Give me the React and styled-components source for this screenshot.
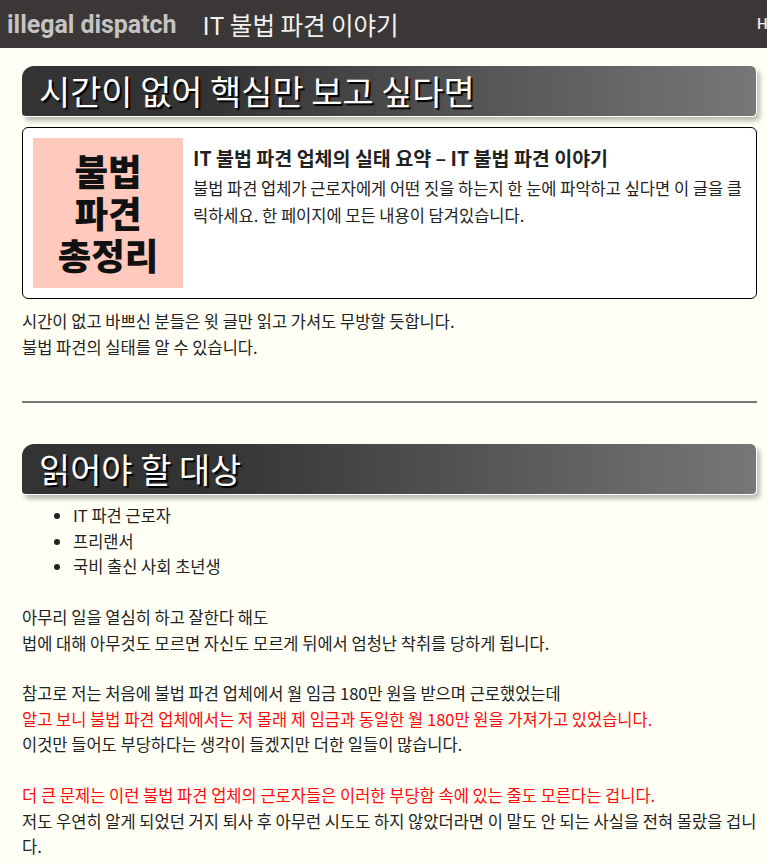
import styled, { createGlobalStyle } from "styled-components";

const Global = createGlobalStyle`
    body {
        margin: 0;
        background: #fffff5;
        color: #222;
        font-family: "Noto Sans CJK KR", "Noto Sans", sans-serif;
        overflow-x: hidden;
    }
`;

const Header = styled.header`
    height: 48px;
    background: #3b3736;
    display: flex;
    align-items: center;
    padding-left: 7px;
    overflow: hidden;
    white-space: nowrap;
`;

const Logo = styled.div`
    font-family: Roboto, "Noto Sans", sans-serif;
    font-weight: 700;
    font-size: 25px;
    color: #c4c4c4;
    letter-spacing: -0.05px;
    flex: none;
`;

const SiteTitle = styled.div`
    margin-left: 26px;
    font-size: 24.5px;
    color: #f2f2f2;
    flex: none;
`;

const Nav = styled.nav`
    margin-left: auto;
    margin-right: -40px;
    width: 50px;
    flex: none;
    font-family: Roboto, sans-serif;
    font-size: 15px;
    font-weight: 500;
    color: #eee;
`;

const Main = styled.main`
    padding: 18px 10px 0 22px;
    font-size: 16.5px;
    line-height: 25.6px;
`;

const SectionTitle = styled.h2`
    margin: 0;
    height: 51px;
    box-sizing: border-box;
    padding-left: 17px;
    display: flex;
    align-items: center;
    font-size: 33.9px;
    font-weight: 400;
    color: #fff;
    text-shadow: 2px 2px 1px #000;
    background: linear-gradient(to right, #333 25%, #777);
    border-radius: 12px 6px 5px 4px;
    border-right: 1px solid #fff;
    border-bottom: 1px solid #fff;
    box-shadow: 3px 4px 5px rgba(0, 0, 0, 0.28);
`;

const Card = styled.a`
    margin-top: 10px;
    display: flex;
    gap: 10px;
    padding: 10px;
    background: #fff;
    border: 1px solid #000;
    border-radius: 6px;
    color: inherit;
    text-decoration: none;
`;

const Thumb = styled.div`
    width: 150px;
    height: 150px;
    flex: none;
    background: #ffcabd;
    display: flex;
    align-items: center;
    justify-content: center;
    text-align: center;
    font-size: 36.5px;
    font-weight: 900;
    line-height: 42px;
    color: #111;
`;

const CardBody = styled.div`
    padding-top: 7px;
`;

const CardTitle = styled.div`
    font-size: 19.5px;
    font-weight: 700;
    line-height: 26px;
    color: #222;
`;

const CardText = styled.div`
    margin-top: 4px;
    font-size: 16.5px;
    line-height: 26.5px;
    color: #222;
`;

const Para = styled.p`
    margin: ${(p) => p.$top || "10px"} 0 0;
    color: #222;
`;

const Red = styled.span`
    color: #ff0a0a;
`;

const Rule = styled.hr`
    margin: 41px 0 41px;
    border: none;
    border-top: 2px solid #777;
`;

const List = styled.ul`
    margin: 8px 0 0;
    padding-left: 51px;
`;

const App = () => {
    return <>
        <Global />
        <Header>
            <Logo>illegal dispatch</Logo>
            <SiteTitle>IT 불법 파견 이야기</SiteTitle>
            <Nav>HOME</Nav>
        </Header>
        <Main>
            <SectionTitle>시간이 없어 핵심만 보고 싶다면</SectionTitle>
            <Card href="#">
                <Thumb>불법<br />파견<br />총정리</Thumb>
                <CardBody>
                    <CardTitle>IT 불법 파견 업체의 실태 요약 – IT 불법 파견 이야기</CardTitle>
                    <CardText>
                        불법 파견 업체가 근로자에게 어떤 짓을 하는지 한 눈에 파악하고 싶다면 이 글을 클릭하세요. 한 페이지에 모든 내용이 담겨있습니다.
                    </CardText>
                </CardBody>
            </Card>
            <Para>
                시간이 없고 바쁘신 분들은 윗 글만 읽고 가셔도 무방할 듯합니다.<br />
                불법 파견의 실태를 알 수 있습니다.
            </Para>
            <Rule />
            <SectionTitle>읽어야 할 대상</SectionTitle>
            <List>
                <li>IT 파견 근로자</li>
                <li>프리랜서</li>
                <li>국비 출신 사회 초년생</li>
            </List>
            <Para $top="25px">
                아무리 일을 열심히 하고 잘한다 해도<br />
                법에 대해 아무것도 모르면 자신도 모르게 뒤에서 엄청난 착취를 당하게 됩니다.
            </Para>
            <Para $top="25px">
                참고로 저는 처음에 불법 파견 업체에서 월 임금 180만 원을 받으며 근로했었는데<br />
                <Red>알고 보니 불법 파견 업체에서는 저 몰래 제 임금과 동일한 월 180만 원을 가져가고 있었습니다.</Red><br />
                이것만 들어도 부당하다는 생각이 들겠지만 더한 일들이 많습니다.
            </Para>
            <Para $top="25px">
                <Red>더 큰 문제는 이런 불법 파견 업체의 근로자들은 이러한 부당함 속에 있는 줄도 모른다는 겁니다.</Red><br />
                저도 우연히 알게 되었던 거지 퇴사 후 아무런 시도도 하지 않았더라면 이 말도 안 되는 사실을 전혀 몰랐을 겁니다.
            </Para>
        </Main>
    </>
}

export default App;
